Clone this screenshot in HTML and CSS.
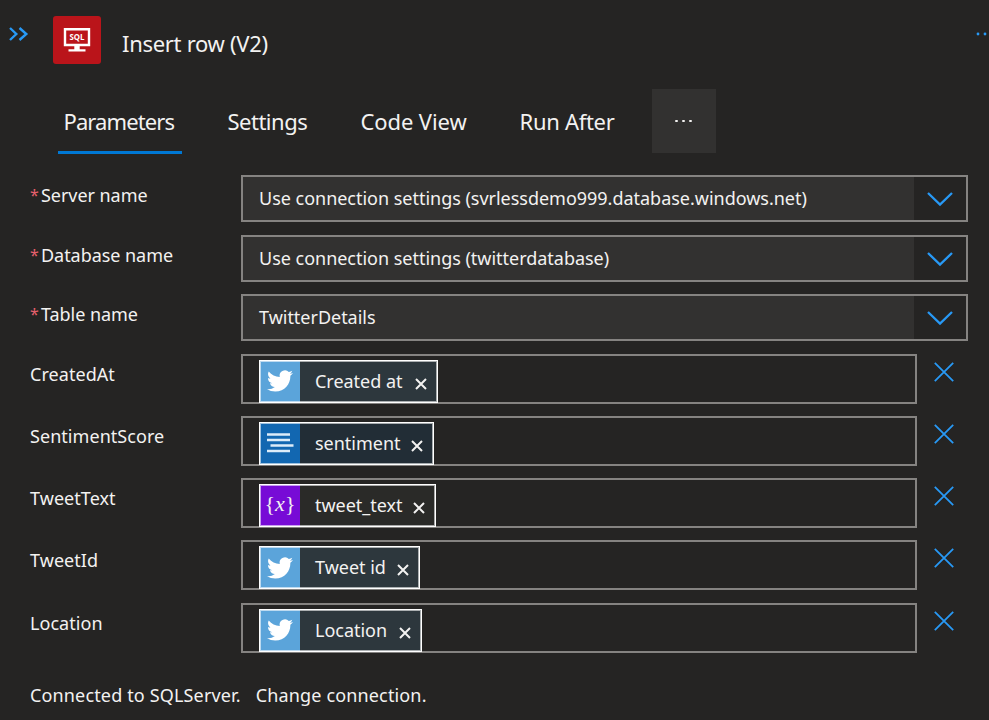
FILE: index.html
```html
<!DOCTYPE html>
<html lang="en">
<head>
<meta charset="utf-8">
<title>Insert row (V2)</title>
<link rel="stylesheet" href="styles.css">
</head>
<body>
<svg class="defs" width="0" height="0" aria-hidden="true">
  <symbol id="chevron" viewBox="0 0 26 14"><path d="M1 1l12 11.600L25 1"/></symbol>
  <symbol id="cross" viewBox="0 0 20 20"><path d="M.8.8l18.400 18.400M19.200.8L.8 19.200"/></symbol>
  <symbol id="small-cross" viewBox="0 0 12 12"><path d="M1 1l10 10M11 1L1 11"/></symbol>
  <symbol id="bird" viewBox="0 0 24 24"><path d="M23.95 4.57a10 10 0 0 1-2.82.77 4.96 4.96 0 0 0 2.16-2.72c-.95.55-2 .95-3.13 1.18a4.92 4.92 0 0 0-8.38 4.48C7.69 8.1 4.07 6.13 1.64 3.16a4.82 4.82 0 0 0-.67 2.48c0 1.71.87 3.21 2.19 4.1a4.9 4.9 0 0 1-2.23-.62v.06a4.92 4.92 0 0 0 3.95 4.83 5 5 0 0 1-2.21.08 4.94 4.94 0 0 0 4.6 3.42A9.87 9.87 0 0 1 0 19.54a13.99 13.99 0 0 0 7.55 2.21c9.05 0 14-7.5 14-13.98 0-.21 0-.42-.02-.63a9.94 9.94 0 0 0 2.46-2.55z"/></symbol>
</svg>
<main class="panel">
  <header class="header">
    <svg class="collapse" viewBox="0 0 20 14"><path d="M1 1l6.300 6L1 13M10.500 1l6.800 6-6.800 6"/></svg>
    <div class="logo">
      <svg viewBox="0 0 28 26"><path class="screen" d="M2 2.200h24v15.800H2z"/><path class="stand" d="M11.300 18h5.400v4.200H22.500V24.600H5.500v-2.400h5.800z"/><text x="14" y="13.400" textLength="15" lengthAdjust="spacingAndGlyphs">SQL</text></svg>
    </div>
    <h1 class="title">Insert row (V2)</h1>
    <svg class="more" viewBox="0 0 14 4"><circle cx="3" cy="2" r="1.400"/><circle cx="10" cy="2" r="1.400"/></svg>
  </header>
  <nav class="tabs">
    <a class="tab tab-params active">Parameters</a>
    <a class="tab tab-settings">Settings</a>
    <a class="tab tab-code">Code View</a>
    <a class="tab tab-run">Run After</a>
    <button class="overflow"><i></i><i></i><i></i></button>
  </nav>
  <section class="selects">
    <div class="row"><label class="label"><b>*</b><span>Server name</span></label><div class="select"><span class="value">Use connection settings (svrlessdemo999.database.windows.net)</span><span class="arrow"><svg><use href="#chevron"/></svg></span></div></div>
    <div class="row"><label class="label"><b>*</b><span>Database name</span></label><div class="select"><span class="value">Use connection settings (twitterdatabase)</span><span class="arrow"><svg><use href="#chevron"/></svg></span></div></div>
    <div class="row"><label class="label"><b>*</b><span>Table name</span></label><div class="select"><span class="value">TwitterDetails</span><span class="arrow"><svg><use href="#chevron"/></svg></span></div></div>
  </section>
  <section class="fields">
    <div class="row"><label class="label">CreatedAt</label><div class="input"><span class="token twitter w-created"><span class="icon"><svg class="bird"><use href="#bird"/></svg></span><span class="name">Created at</span><svg class="remove"><use href="#small-cross"/></svg></span></div><svg class="clear"><use href="#cross"/></svg></div>
    <div class="row"><label class="label">SentimentScore</label><div class="input"><span class="token text-analytics w-sentiment"><span class="icon"><svg class="lines" viewBox="0 0 28 20"><path d="M1 1.500h23M1 7h23M4.500 12.500h23M1 18h23"/></svg></span><span class="name">sentiment</span><svg class="remove"><use href="#small-cross"/></svg></span></div><svg class="clear"><use href="#cross"/></svg></div>
    <div class="row"><label class="label">TweetText</label><div class="input"><span class="token variable w-text"><span class="icon">{<em>x</em>}</span><span class="name">tweet_text</span><svg class="remove"><use href="#small-cross"/></svg></span></div><svg class="clear"><use href="#cross"/></svg></div>
    <div class="row"><label class="label">TweetId</label><div class="input"><span class="token twitter w-id"><span class="icon"><svg class="bird"><use href="#bird"/></svg></span><span class="name">Tweet id</span><svg class="remove"><use href="#small-cross"/></svg></span></div><svg class="clear"><use href="#cross"/></svg></div>
    <div class="row"><label class="label">Location</label><div class="input"><span class="token twitter w-location"><span class="icon"><svg class="bird"><use href="#bird"/></svg></span><span class="name">Location</span><svg class="remove"><use href="#small-cross"/></svg></span></div><svg class="clear"><use href="#cross"/></svg></div>
  </section>
  <footer class="footer"><span>Connected to SQLServer.</span><a>Change connection.</a></footer>
</main>
</body>
</html>
```
FILE: styles.css
```css
* { box-sizing: border-box; }
body {
  margin: 0;
  background: #252423;
  color: #f3f2f1;
  font: 18px/24px "Noto Sans", "Open Sans", sans-serif;
  letter-spacing: 0;
}
svg { display: block; flex: none; fill: none; }
.defs { position: absolute; }
.panel { width: 989px; height: 720px; overflow: hidden; }

.header { display: flex; height: 88px; padding: 16px 0 0 9px; align-items: flex-start; }
.collapse { width: 20px; height: 14px; margin-top: 11px; stroke: #2899f5; stroke-width: 2.400; }
.logo { width: 48px; height: 48px; margin-left: 24px; border-radius: 3px; background: #ba141a; padding: 11px 0 0 10px; }
.logo svg { width: 28px; height: 26px; }
.screen { stroke: #fff; stroke-width: 2.400; }
.stand { fill: #fff; }
.logo text { fill: #fff; font: bold 9px "Open Sans", sans-serif; letter-spacing: 0; text-anchor: middle; }
.title { margin: 12px 0 0 21px; font-size: 22px; line-height: 30px; font-weight: 400; letter-spacing: -0.3px; }
.more { width: 14px; height: 4px; margin: 16px 0 0 auto; fill: #2899f5; }

.tabs { display: flex; height: 65px; padding-left: 57.500px; }
.tab { height: 66px; padding: 17px 0 0 7px; font-size: 22px; line-height: 32px; letter-spacing: -0.1px; white-space: nowrap; }
.tab-params { width: 124px; padding-left: 6px; letter-spacing: -0.900px; }
.active { border-bottom: 3px solid #0078d4; }
.tab-settings { margin-left: 39px; width: 133px; letter-spacing: -0.500px; }
.tab-code { width: 159px; }
.tab-run { width: 139px; letter-spacing: -0.300px; }
.overflow { display: flex; gap: 4.500px; align-items: center; justify-content: center; width: 64px; height: 64px; margin-top: 1px; padding: 0; border: 0; background: #323130; }
.overflow i { width: 2.800px; height: 2.800px; border-radius: 50%; background: #f3f2f1; }

.row { display: flex; align-items: flex-start; padding-left: 30px; }
.label { display: flex; width: 211px; }
.label b { width: 11px; color: #e5606c; font-size: 16px; font-weight: 400; }
.selects { display: grid; row-gap: 12.500px; margin-top: 22px; }
.selects .label { padding-top: 8px; letter-spacing: -0.05px; }
.select { display: flex; width: 727px; height: 47px; border: 2px solid #858381; }
.value { flex: 1; padding: 9px 0 0 16px; background: #323130; letter-spacing: -0.020px; white-space: nowrap; }
.arrow { width: 52px; padding: 15px 0 0 13px; }
.arrow svg { width: 26px; height: 14px; stroke: #2899f5; stroke-width: 2.300; }

.fields { display: grid; row-gap: 12.300px; margin-top: 12.500px; }
.fields .label { padding-top: 8px; letter-spacing: 0.050px; }
.input { width: 676px; height: 50px; padding: 4px 0 0 16px; border: 2px solid #858381; }
.token { display: flex; height: 43px; border: 1px solid #fff; outline: 1px solid #fff9; outline-offset: -2px; }
.icon { display: flex; align-items: center; justify-content: center; width: 40px; }
.name { flex: 1; padding: 8px 0 0 15px; letter-spacing: -0.020px; white-space: nowrap; }
.remove { width: 12px; height: 12px; margin: 17px 10px 0 0; stroke: #f3f2f1; stroke-width: 2; }
.w-created { width: 179px; }
.w-sentiment { width: 175px; }
.w-text { width: 177px; }
.w-id { width: 161px; }
.w-location { width: 163px; }
.twitter { background: #2d373d; }
.twitter .icon { background: #5ba4da; }
.bird { width: 26px; height: 26px; fill: #fff; }
.text-analytics { background: #222d36; }
.text-analytics .icon { background: #1267b1; }
.lines { width: 28px; height: 20px; stroke: #dcecf9; stroke-width: 2.300; }
.variable { background: #2a2a28; }
.variable .icon { padding-bottom: 3px; background: #770bd6; font: 22px "Liberation Serif", serif; }
.clear { width: 20px; height: 20px; margin: 8px 0 0 17px; stroke: #2899f5; stroke-width: 1.800; }
.footer { display: flex; gap: 15px; padding: 30px 0 0 30px; letter-spacing: 0.150px; }
```
